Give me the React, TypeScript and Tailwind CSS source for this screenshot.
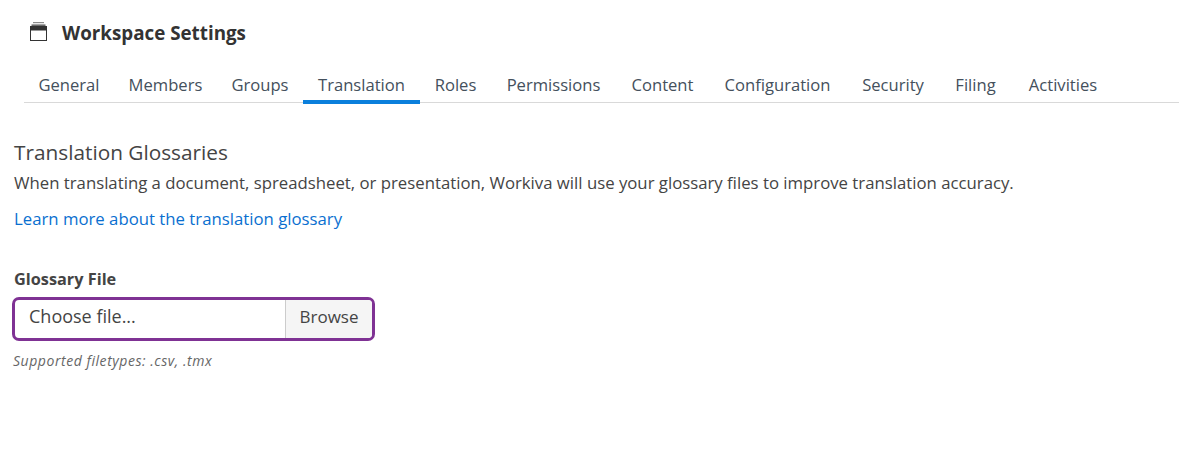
import React from "react";

const tabs = [
  { label: "General", width: "w-[90px]" },
  { label: "Members", width: "w-[103px]" },
  { label: "Groups", width: "w-[86px]" },
  { label: "Translation", width: "w-[117px]" },
  { label: "Roles", width: "w-[71px]" },
  { label: "Permissions", width: "w-[125px]" },
  { label: "Content", width: "w-[93px]" },
  { label: "Configuration", width: "w-[137px]" },
  { label: "Security", width: "w-[94px]" },
  { label: "Filing", width: "w-[71px]" },
  { label: "Activities", width: "w-[104px]" },
];

const WorkspaceIcon = () => (
  <svg width="17" height="19" viewBox="0 0 17 19" fill="none" className="shrink-0 -mt-[3px]">
    <rect x="3" y="0" width="11" height="1.2" fill="#8a8a8a" />
    <rect x="1.5" y="2.4" width="14" height="1.6" fill="#6b6b6b" />
    <rect x="0.5" y="4.5" width="16" height="14" fill="#fff" stroke="#333" />
    <rect x="0.5" y="4.5" width="16" height="4" fill="#333" />
  </svg>
);

export default function App() {
  return (
    <div className="w-[1179px] h-[452px] bg-white overflow-hidden font-['Open_Sans',sans-serif] text-[#3e3c3a]">
      <div className="pl-[24px] pt-[20px]">
        <div className="flex items-center h-[26px] pl-[6px]">
          <WorkspaceIcon />
          <h1 className="ml-[15px] text-[18.8px] leading-[26px] font-bold text-[#333]">Workspace Settings</h1>
        </div>
        <div className="flex mt-[19px] h-[38px] border-b border-[#d9d9d9]">
          {tabs.map((t) => (
            <div
              key={t.label}
              className={
                t.label === "Translation"
                  ? `${t.width} text-center h-[39px] leading-[40px] text-[16.6px] text-[#44505c] border-b-[4px] border-[#0a7fdc]`
                  : `${t.width} text-center h-[38px] leading-[40px] text-[16.6px] text-[#44505c]`
              }
            >
              {t.label}
            </div>
          ))}
        </div>
      </div>
      <div className="pl-[14px] pt-[35px]">
        <h2 className="text-[20.8px] leading-[28px] text-[#444]">Translation Glossaries</h2>
        <p className="text-[16.75px] leading-[24px] mt-[5px] text-[#444]">
          When translating a document, spreadsheet, or presentation, Workiva will use your glossary files to improve translation accuracy.
        </p>
        <a className="block mt-[12px] text-[16.75px] leading-[24px] text-[#0a6fd0]">Learn more about the translation glossary</a>
        <div className="mt-[36px] text-[16.3px] leading-[24px] font-bold text-[#444]">Glossary File</div>
        <div className="mt-[6px] -ml-[2px] flex w-[363px] h-[44px] rounded-[7px] border-[3px] border-[#7f3294] overflow-hidden">
          <div className="flex-1 pl-[14px] leading-[33px] text-[18px] text-[#444]">Choose file...</div>
          <div className="w-[87px] border-l border-[#ccc] bg-[#f5f5f5] text-center leading-[34px] text-[17px] text-[#444]">Browse</div>
        </div>
        <div className="mt-[10px] -ml-[1px] text-[14px] leading-[20px] italic tracking-[0.55px] text-[#666]">Supported filetypes: .csv, .tmx</div>
      </div>
    </div>
  );
}
